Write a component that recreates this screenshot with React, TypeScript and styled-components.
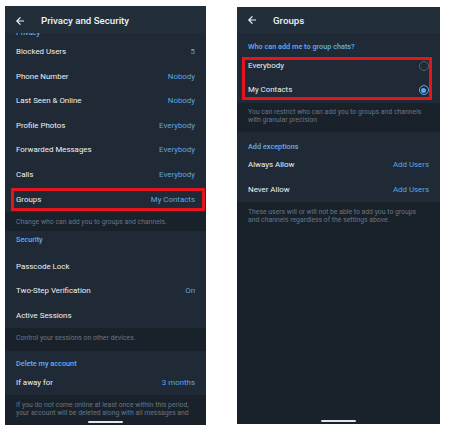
import React from "react";
import styled, { createGlobalStyle } from "styled-components";

const Global = createGlobalStyle`
  html, body { margin: 0; padding: 0; background: #ffffff; }
  body { font-family: Roboto, "Noto Sans", "Liberation Sans", sans-serif; -webkit-font-smoothing: antialiased; }
  * { box-sizing: border-box; }
`;

const Page = styled.div`
  display: flex;
  align-items: flex-start;
  gap: 31px;
  padding: 6px 0 0 5px;
  width: 451px;
  height: 435px;
`;

const Phone = styled.div<{ $w: number; $h: number; $top: number }>`
  position: relative;
  display: flex;
  flex-direction: column;
  width: ${(p) => p.$w}px;
  height: ${(p) => p.$h}px;
  margin-top: ${(p) => p.$top}px;
  background: #19212a;
  overflow: hidden;
`;

const TopBar = styled.div<{ $h: number; $pt: number }>`
  flex: none;
  display: flex;
  align-items: center;
  gap: 17px;
  height: ${(p) => p.$h}px;
  padding: ${(p) => p.$pt}px 0 0 11px;
  background: #232e3b;
  z-index: 1;
`;

const Title = styled.div`
  font-size: 9.7px;
  font-weight: 500;
  color: #f1f3f5;
`;

const ClippedHeader = styled.div`
  flex: none;
  height: 6.7px;
  overflow: hidden;
  display: flex;
  align-items: flex-end;
  padding: 0 11px 3px;
  background: #202a36;
  color: #62aef0;
  font-size: 7.3px;
  font-weight: 500;
  line-height: 9px;
`;

const SectionHeader = styled.div<{ $h: number; $pt: number }>`
  flex: none;
  height: ${(p) => p.$h}px;
  padding: ${(p) => p.$pt}px 11px 0;
  background: #202a36;
  color: #62aef0;
  font-size: 7.3px;
  font-weight: 500;
  line-height: 9px;
`;

const Row = styled.div<{ $h?: number }>`
  flex: none;
  display: flex;
  align-items: center;
  justify-content: space-between;
  height: ${(p) => p.$h ?? 24.6}px;
  padding: 0 11px;
  background: #202a36;
  color: #eef1f3;
  font-size: 7.9px;
  line-height: 10px;
`;

const Value = styled.span`
  color: #5fa6df;
`;

const Hint = styled.div<{ $pt: number; $pb: number; $fill?: boolean }>`
  flex: ${(p) => (p.$fill ? "1" : "none")};
  padding: ${(p) => p.$pt}px 11px ${(p) => p.$pb}px;
  background: #19212a;
  color: #6b7682;
  font-size: 6.85px;
  line-height: 8px;
`;

const Highlight = styled.div<{ $inset: string }>`
  position: relative;
  flex: none;
  display: flex;
  flex-direction: column;
  &::after {
    content: "";
    position: absolute;
    inset: ${(p) => p.$inset};
    border: 3px solid #e6141c;
    pointer-events: none;
  }
`;

const Radio = styled.span<{ $on?: boolean }>`
  width: 10px;
  height: 10px;
  border-radius: 50%;
  border: 1.4px solid ${(p) => (p.$on ? "#5aa9f0" : "#56616c")};
  display: flex;
  align-items: center;
  justify-content: center;
  margin-right: 0.5px;
  &::before {
    content: "";
    width: 5px;
    height: 5px;
    border-radius: 50%;
    background: ${(p) => (p.$on ? "#5aa9f0" : "transparent")};
  }
`;

const HomeBar = styled.div<{ $bottom: number }>`
  position: absolute;
  left: 50%;
  bottom: ${(p) => p.$bottom}px;
  width: 35px;
  height: 1.5px;
  margin-left: -17.5px;
  border-radius: 1px;
  background: #e4e7ea;
`;

const BackArrow = () => (
  <svg width="8" height="8" viewBox="0 0 8 8" fill="none">
    <path d="M7.5 4H0.8M4 0.8L0.8 4L4 7.2" stroke="#eef1f4" strokeWidth="1.2" strokeLinecap="square" />
  </svg>
);

const privacyRows: [string, string][] = [
  ["Blocked Users", "5"],
  ["Phone Number", "Nobody"],
  ["Last Seen & Online", "Nobody"],
  ["Profile Photos", "Everybody"],
  ["Forwarded Messages", "Everybody"],
  ["Calls", "Everybody"],
];

export default function App() {
  return (
    <>
      <Global />
      <Page>
        <Phone $w={201} $h={419} $top={0}>
          <TopBar $h={27} $pt={2}>
            <BackArrow />
            <Title>Privacy and Security</Title>
          </TopBar>
          <ClippedHeader>Privacy</ClippedHeader>
          {privacyRows.map(([l, v]) => (
            <Row key={l}>
              <span>{l}</span>
              <Value>{v}</Value>
            </Row>
          ))}
          <Highlight $inset="0.3px 1px 1.2px 6px">
            <Row>
              <span>Groups</span>
              <Value>My Contacts</Value>
            </Row>
          </Highlight>
          <Hint $pt={6} $pb={5}>Change who can add you to groups and channels.</Hint>
          <SectionHeader $h={23.7} $pt={4}>Security</SectionHeader>
          <Row>
            <span>Passcode Lock</span>
          </Row>
          <Row>
            <span>Two-Step Verification</span>
            <Value>On</Value>
          </Row>
          <Row>
            <span>Active Sessions</span>
          </Row>
          <Hint $pt={5.5} $pb={9}>Control your sessions on other devices.</Hint>
          <SectionHeader $h={19.7} $pt={8.5}>Delete my account</SectionHeader>
          <Row>
            <span>If away for</span>
            <Value>3 months</Value>
          </Row>
          <Hint $pt={5.8} $pb={0} $fill>
            If you do not come online at least once within this period,
            <br />
            your account will be deleted along with all messages and
          </Hint>
          <HomeBar $bottom={2.2} />
        </Phone>

        <Phone $w={203} $h={417} $top={1}>
          <TopBar $h={26} $pt={0}>
            <BackArrow />
            <Title>Groups</Title>
          </TopBar>
          <SectionHeader $h={21} $pt={9}>Who can add me to group chats?</SectionHeader>
          <Highlight $inset="3px 8px 2.5px 5px">
            <Row $h={24.3}>
              <span>Everybody</span>
              <Radio />
            </Row>
            <Row $h={24.3}>
              <span>My Contacts</span>
              <Radio $on />
            </Row>
          </Highlight>
          <Hint $pt={5.5} $pb={8}>
            You can restrict who can add you to groups and channels
            <br />
            with granular precision
          </Hint>
          <SectionHeader $h={21} $pt={9.5}>Add exceptions</SectionHeader>
          <Row>
            <span>Always Allow</span>
            <Value>Add Users</Value>
          </Row>
          <Row>
            <span>Never Allow</span>
            <Value>Add Users</Value>
          </Row>
          <Hint $pt={5.8} $pb={0} $fill>
            These users will or will not be able to add you to groups
            <br />
            and channels regardless of the settings above.
          </Hint>
          <HomeBar $bottom={2.5} />
        </Phone>
      </Page>
    </>
  );
}
